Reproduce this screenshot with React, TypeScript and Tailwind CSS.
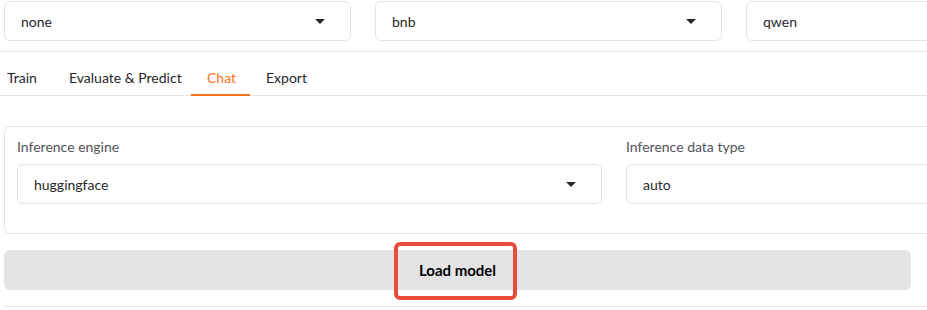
import React from "react"

const font = { fontFamily: 'Lato, "Noto Sans", "Open Sans", sans-serif' }

function Caret() {
  return (
    <svg width="10" height="5" viewBox="0 0 10 5" className="shrink-0">
      <path d="M0 0 L10 0 L5 5 Z" fill="#27272a" />
    </svg>
  )
}

function Select({ value, caret = true, className }: { value: string; caret?: boolean; className: string }) {
  return (
    <div className={`flex h-10 items-center justify-between rounded-md border border-[#e4e4e7] bg-white pl-4 pr-[25px] text-[14px] text-[#27272a] ${className}`}>
      <span>{value}</span>
      {caret && <Caret />}
    </div>
  )
}

const tabs = [
  { label: "Train", cls: "w-[46px]" },
  { label: "Evaluate & Predict", cls: "w-[138px] pl-4" },
  { label: "Chat", cls: "w-[59px] pl-4" },
  { label: "Export", cls: "w-[70px] pl-4" },
]

export default function App() {
  return (
    <div className="h-[310px] w-[927px] overflow-hidden bg-white" style={font}>
      <div className="w-[1200px]">
        {/* model row */}
        <div className="flex gap-6 pl-1 pt-[1px]">
          <Select value="none" className="w-[347px]" />
          <Select value="bnb" className="w-[347px]" />
          <Select value="qwen" caret={false} className="w-[347px]" />
        </div>

        {/* tabs */}
        <div className="mt-[10px] border-t border-[#e4e4e7]">
          <div className="flex h-[44px] items-end border-b border-[#e4e4e7] pl-[7px] text-[14px] text-[#27272a]">
            {tabs.map((t) =>
              t.label === "Chat" ? (
                <div key={t.label} className={`-mb-px whitespace-nowrap border-b-2 border-[#f97316] pb-[6px] text-[#f97316] ${t.cls}`}>
                  {t.label}
                </div>
              ) : (
                <div key={t.label} className={`whitespace-nowrap pb-[7px] ${t.cls}`}>
                  {t.label}
                </div>
              )
            )}
          </div>
        </div>

        {/* inference panel */}
        <div className="ml-1 mt-[30px] h-[108px] rounded-md border border-[#e4e4e7] px-3 pt-[9px]">
          <div className="flex gap-6">
            <div className="w-[585px]">
              <div className="mb-[7px] text-[14px] text-[#52525b]">Inference engine</div>
              <Select value="huggingface" className="w-full" />
            </div>
            <div className="flex-1">
              <div className="mb-[7px] text-[14px] text-[#52525b]">Inference data type</div>
              <Select value="auto" caret={false} className="w-full" />
            </div>
          </div>
        </div>

        {/* load button */}
        <div className="relative ml-1 mt-4 flex h-10 w-[907px] items-center justify-center rounded-md bg-[#e4e4e7]">
          <span className="text-[15px] font-bold text-black">Load model</span>
          <div className="pointer-events-none absolute left-[390px] top-[-8px] h-[58px] w-[123px] rounded-md border-4 border-[#e74c3c]" />
        </div>

        <div className="ml-1 mt-4 border-t border-[#e4e4e7]" />
      </div>
    </div>
  )
}
